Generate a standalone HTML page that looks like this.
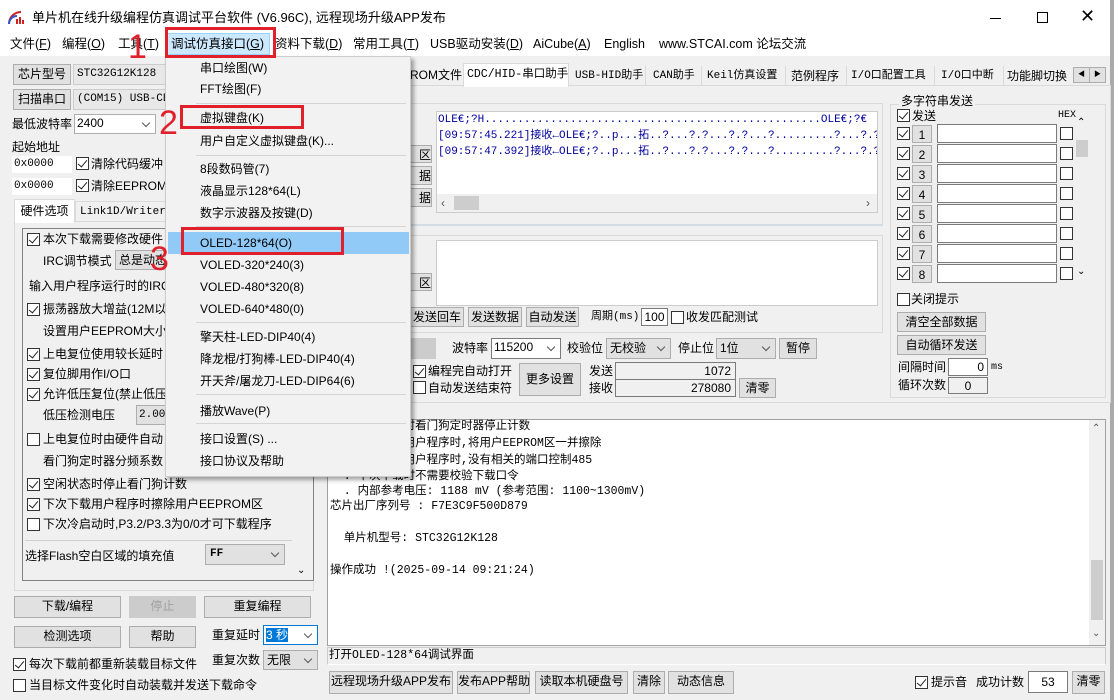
<!DOCTYPE html>
<html><head><meta charset="utf-8"><style>
*{box-sizing:border-box;margin:0;padding:0}
body{width:1114px;height:700px;overflow:hidden;background:#f0f0f0;font-family:"Liberation Sans","Noto Sans CJK SC",sans-serif;font-size:12px;color:#000;position:relative}
div,span{position:absolute;white-space:nowrap}
.t{line-height:16px}
.b{background:#e1e1e1;border:1px solid #adadad;text-align:center;line-height:18px}
.i{background:#fff;border:1px solid #7a7a7a;line-height:16px;padding-left:2px}
.c{width:13px;height:13px;border:1px solid #333;background:#fff}
.c.k::after{content:"";position:absolute;left:3px;top:0px;width:4px;height:8px;border:solid #222;border-width:0 1.5px 1.5px 0;transform:rotate(40deg)}
.m{font-family:"Liberation Mono","Noto Sans CJK SC",monospace;font-size:11px}
.pre{white-space:pre}
.red{border:3px solid #e0202a}
.n{color:#e0202a;font-size:34px;line-height:34px;font-family:"Liberation Sans",sans-serif}
.sel::after{content:"";position:absolute;right:6px;top:5px;width:5px;height:5px;border:solid #555;border-width:0 1px 1px 0;transform:rotate(45deg)}
.mi{left:34px;line-height:16px;font-size:12px}
.sep{left:30px;right:4px;height:1px;background:#d5d5d5}
</style></head><body>
<div style="left:0;top:0;width:1114px;height:56px;background:#fff"></div>
<div style="left:8px;top:11px;width:16px;height:14px">
<svg width="16" height="14"><path d="M1 13 A12 12 0 0 1 13 1" stroke="#c22" stroke-width="2" fill="none"/><path d="M1 13 A8 8 0 0 1 9 5" stroke="#3355cc" stroke-width="2" fill="none"/><rect x="8" y="8" width="2" height="5" fill="#c22"/><rect x="11" y="6" width="2" height="7" fill="#c22"/><rect x="14" y="9" width="2" height="4" fill="#c22"/></svg></div>
<div class="t" style="left:32px;top:10px;font-size:13px">单片机在线升级编程仿真调试平台软件 (V6.96C), 远程现场升级APP发布</div>
<div style="left:990px;top:18px;width:11px;height:1px;background:#000"></div>
<div style="left:1037px;top:12px;width:11px;height:11px;border:1px solid #000"></div>
<div class="t" style="left:1080px;top:8px;font-size:18px;font-weight:300">✕</div>
<div style="left:1110px;top:0;width:4px;height:700px;background:#aaa"></div>
<div style="left:166px;top:33px;width:104px;height:22px;background:#cce8ff;border:1px solid #99d1ff"></div>
<div class="t" style="left:10px;top:36px;font-size:12.5px">文件(<u>F</u>)</div>
<div class="t" style="left:62px;top:36px;font-size:12.5px">编程(<u>O</u>)</div>
<div class="t" style="left:118px;top:36px;font-size:12.5px">工具(<u>T</u>)</div>
<div class="t" style="left:171px;top:36px;font-size:12.5px">调试仿真接口(<u>G</u>)</div>
<div class="t" style="left:275px;top:36px;font-size:12.5px">资料下载(<u>D</u>)</div>
<div class="t" style="left:353px;top:36px;font-size:12.5px">常用工具(<u>T</u>)</div>
<div class="t" style="left:430px;top:36px;font-size:12.5px">USB驱动安装(<u>D</u>)</div>
<div class="t" style="left:533px;top:36px;font-size:12.5px">AiCube(<u>A</u>)</div>
<div class="t" style="left:604px;top:36px;font-size:12.5px">English</div>
<div class="t" style="left:659px;top:36px;font-size:12.5px">www.STCAI.com 论坛交流</div>

<div class="b" style="left:13px;top:64px;width:58px;height:21px">芯片型号</div>
<div class="m" style="left:73px;top:64px;width:94px;height:21px;background:#e8e8e8;border:1px solid #ccc;line-height:19px;padding-left:3px">STC32G12K128</div>
<div class="b" style="left:13px;top:89px;width:58px;height:21px">扫描串口</div>
<div class="m" style="left:73px;top:89px;width:94px;height:21px;background:#e8e8e8;border:1px solid #ccc;line-height:19px;padding-left:3px">(COM15) USB-CDC</div>
<div class="t" style="left:12px;top:116px">最低波特率</div>
<div class="i sel" style="left:74px;top:114px;width:82px;height:20px;border-color:#adadad">2400</div>
<div class="t" style="left:12px;top:139px">起始地址</div>
<div class="i m" style="left:12px;top:156px;width:60px;height:17px;border:none;line-height:17px">0x0000</div>
<div class="c k" style="left:76px;top:157px"></div><div class="t" style="left:91px;top:156px">清除代码缓冲</div>
<div class="i m" style="left:12px;top:178px;width:60px;height:17px;border:none;line-height:17px">0x0000</div>
<div class="c k" style="left:76px;top:179px"></div><div class="t" style="left:91px;top:178px">清除EEPROM缓</div>
<div style="left:14px;top:221px;width:300px;height:370px;border:1px solid #dadada;background:#f0f0f0"></div>
<div style="left:14px;top:199px;width:61px;height:24px;background:#fff;border:1px solid #dadada;border-bottom:none;text-align:center;line-height:22px">硬件选项</div>
<div class="m" style="left:75px;top:201px;width:92px;height:21px;border:1px solid #dadada;line-height:20px;padding-left:4px">Link1D/Writer1</div>
<div style="left:22px;top:228px;width:292px;height:353px;border:1px solid #828282"></div>
<div class="c k" style="left:27px;top:233px"></div><div class="t" style="left:43px;top:231px">本次下载需要修改硬件</div>
<div class="t" style="left:43px;top:253px">IRC调节模式</div><div class="b" style="left:115px;top:250px;width:60px;height:20px;text-align:left;padding-left:3px">总是动态</div>
<div class="t" style="left:29px;top:278px">输入用户程序运行时的IRC</div>
<div class="c k" style="left:27px;top:303px"></div><div class="t" style="left:43px;top:301px">振荡器放大增益(12M以上</div>
<div class="t" style="left:43px;top:323px">设置用户EEPROM大小</div>
<div class="c k" style="left:27px;top:348px"></div><div class="t" style="left:43px;top:346px">上电复位使用较长延时</div>
<div class="c k" style="left:27px;top:368px"></div><div class="t" style="left:43px;top:366px">复位脚用作I/O口</div>
<div class="c k" style="left:27px;top:388px"></div><div class="t" style="left:43px;top:386px">允许低压复位(禁止低压</div>
<div class="t" style="left:43px;top:407px">低压检测电压</div><div class="b m" style="left:136px;top:405px;width:40px;height:20px;text-align:left;padding-left:2px">2.00</div>
<div class="c" style="left:27px;top:433px"></div><div class="t" style="left:43px;top:431px">上电复位时由硬件自动</div>
<div class="t" style="left:43px;top:453px">看门狗定时器分频系数</div>
<div class="c k" style="left:27px;top:478px"></div><div class="t" style="left:43px;top:476px">空闲状态时停止看门狗计数</div>
<div class="c k" style="left:27px;top:498px"></div><div class="t" style="left:43px;top:496px">下次下载用户程序时擦除用户EEPROM区</div>
<div class="c" style="left:27px;top:518px"></div><div class="t" style="left:43px;top:516px">下次冷启动时,P3.2/P3.3为0/0才可下载程序</div>
<div style="left:25px;top:540px;width:267px;height:1px;background:#d0d0d0"></div>
<div class="t" style="left:25px;top:548px">选择Flash空白区域的填充值</div>
<div class="b sel m" style="left:205px;top:544px;width:80px;height:21px;text-align:left;padding-left:4px;font-weight:bold">FF</div>
<div class="t" style="left:297px;top:563px;font-size:10px">⌄</div>
<div class="b" style="left:14px;top:596px;width:107px;height:22px">下载/编程</div>
<div class="b" style="left:129px;top:596px;width:67px;height:22px;color:#a0a0a0;border-color:#ccc;background:#ccc">停止</div>
<div class="b" style="left:204px;top:596px;width:107px;height:22px">重复编程</div>
<div class="b" style="left:14px;top:626px;width:107px;height:22px">检测选项</div>
<div class="b" style="left:129px;top:626px;width:67px;height:22px">帮助</div>
<div class="t" style="left:212px;top:627px">重复延时</div>
<div class="i sel" style="left:263px;top:625px;width:55px;height:20px;border-color:#0078d7;padding-top:1px"><span style="position:static;background:#0078d7;color:#fff">3 秒</span></div>
<div class="t" style="left:212px;top:652px">重复次数</div>
<div class="b sel" style="left:263px;top:650px;width:55px;height:20px;text-align:left;padding-left:3px">无限</div>
<div class="c k" style="left:13px;top:658px"></div><div class="t" style="left:29px;top:656px">每次下载前都重新装载目标文件</div>
<div class="c" style="left:13px;top:679px"></div><div class="t" style="left:29px;top:677px">当目标文件变化时自动装载并发送下载命令</div>

<div style="left:405px;top:85px;width:706px;height:318px;border:1px solid #dadada;background:#f0f0f0"></div>
<div class="t" style="left:410px;top:67px">ROM文件</div>
<div style="left:463px;top:63px;width:106px;height:24px;background:#fff;border:1px solid #dadada;border-bottom:none"></div>
<div class="t m" style="left:467px;top:67px;font-size:11.5px">CDC/HID-串口助手</div>
<div class="t m" style="left:575px;top:68px">USB-HID助手</div>
<div style="left:645px;top:66px;width:1px;height:19px;background:#dadada"></div>
<div class="t m" style="left:653px;top:68px">CAN助手</div>
<div style="left:701px;top:66px;width:1px;height:19px;background:#dadada"></div>
<div class="t m" style="left:707px;top:68px">Keil仿真设置</div>
<div style="left:785px;top:66px;width:1px;height:19px;background:#dadada"></div>
<div class="t" style="left:791px;top:68px">范例程序</div>
<div style="left:846px;top:66px;width:1px;height:19px;background:#dadada"></div>
<div class="t m" style="left:851px;top:68px">I/O口配置工具</div>
<div style="left:934px;top:66px;width:1px;height:19px;background:#dadada"></div>
<div class="t m" style="left:941px;top:68px">I/O口中断</div>
<div style="left:1003px;top:66px;width:1px;height:19px;background:#dadada"></div>
<div class="t" style="left:1007px;top:68px">功能脚切换</div>
<div class="b" style="left:1073px;top:67px;width:17px;height:16px;font-size:7px;line-height:14px">◀</div>
<div class="b" style="left:1089px;top:67px;width:17px;height:16px;font-size:7px;line-height:14px">▶</div>
<div style="left:409px;top:103px;width:474px;height:122px;border:1px solid #dadada"></div>
<div style="left:436px;top:111px;width:442px;height:102px;background:#fff;border:1px solid #ccc;overflow:hidden">
<div class="t m" style="left:1px;top:0px;color:#0000a0">OLE€;?H...................................................OLE€;?€</div>
<div class="t m" style="left:1px;top:16px;color:#0000a0">[09:57:45.221]接收←OLE€;?..p...拓..?...?.?...?.?...?.........?...?.?...</div>
<div class="t m" style="left:1px;top:32px;color:#0000a0">[09:57:47.392]接收←OLE€;?..p...拓..?...?.?...?.?...?.........?...?.?...</div>
</div>
<div style="left:437px;top:194px;width:440px;height:18px;background:#f0f0f0"></div>
<div style="left:454px;top:196px;width:25px;height:14px;background:#cdcdcd"></div>
<div class="t" style="left:441px;top:195px;color:#555">‹</div><div class="t" style="left:866px;top:195px;color:#555">›</div>
<div class="b" style="left:408px;top:145px;width:24px;height:18px;text-align:right">区</div>
<div class="b" style="left:408px;top:166px;width:24px;height:19px;text-align:right">据</div>
<div class="b" style="left:408px;top:188px;width:24px;height:19px;text-align:right">据</div>
<div style="left:409px;top:225px;width:474px;height:1px;background:#cde"></div>
<div style="left:409px;top:235px;width:474px;height:98px;border:1px solid #dadada"></div>
<div style="left:436px;top:240px;width:442px;height:66px;background:#fff;border:1px solid #ccc"></div>
<div class="b" style="left:408px;top:273px;width:24px;height:18px;text-align:right">区</div>
<div class="b" style="left:410px;top:307px;width:54px;height:20px">发送回车</div>
<div class="b" style="left:468px;top:307px;width:54px;height:20px">发送数据</div>
<div class="b" style="left:526px;top:307px;width:53px;height:20px">自动发送</div>
<div class="t m" style="left:591px;top:309px">周期(ms)</div>
<div class="i" style="left:641px;top:308px;width:27px;height:18px;text-align:center;padding:0">100</div>
<div class="c" style="left:671px;top:311px"></div><div class="t" style="left:686px;top:309px">收发匹配测试</div>
<div class="b" style="left:410px;top:338px;width:26px;height:21px;background:#ccc;border-color:#ccc"></div>
<div class="t" style="left:452px;top:340px">波特率</div>
<div class="i sel" style="left:491px;top:338px;width:70px;height:21px">115200</div>
<div class="t" style="left:567px;top:340px">校验位</div>
<div class="b sel" style="left:606px;top:338px;width:65px;height:21px;text-align:left;padding-left:3px">无校验</div>
<div class="t" style="left:678px;top:340px">停止位</div>
<div class="b sel" style="left:716px;top:338px;width:60px;height:21px;text-align:left;padding-left:3px">1位</div>
<div class="b" style="left:779px;top:338px;width:38px;height:21px">暂停</div>
<div class="c k" style="left:413px;top:365px"></div><div class="t" style="left:428px;top:363px">编程完自动打开</div>
<div class="c" style="left:413px;top:381px"></div><div class="t" style="left:428px;top:380px">自动发送结束符</div>
<div class="b" style="left:519px;top:363px;width:62px;height:33px;line-height:31px">更多设置</div>
<div class="t" style="left:589px;top:363px">发送</div>
<div class="i" style="left:615px;top:362px;width:121px;height:18px;text-align:right;padding-right:4px;background:#f0f0f0">1072</div>
<div class="t" style="left:589px;top:380px">接收</div>
<div class="i" style="left:615px;top:379px;width:121px;height:18px;text-align:right;padding-right:4px;background:#f0f0f0">278080</div>
<div class="b" style="left:739px;top:378px;width:37px;height:20px">清零</div>

<div style="left:890px;top:104px;width:216px;height:294px;border:1px solid #dadada"></div>
<div class="t" style="left:899px;top:93px;background:#f0f0f0;padding:0 2px">多字符串发送</div>
<div class="c k" style="left:897px;top:109px"></div><div class="t" style="left:912px;top:108px">发送</div>
<div class="t m" style="left:1058px;top:108px;font-size:10px">HEX</div>
<div style="left:1075px;top:123px;width:14px;height:160px;background:#f0f0f0"></div>
<div class="t" style="left:1077px;top:115px;font-size:10px">⌃</div>
<div style="left:1076px;top:140px;width:12px;height:17px;background:#cdcdcd"></div>
<div class="t" style="left:1077px;top:264px;font-size:10px">⌄</div>
<div class="c k" style="left:897px;top:127px"></div><div class="b" style="left:912px;top:125px;width:20px;height:18px">1</div><div class="i" style="left:937px;top:124px;width:120px;height:19px"></div><div class="c" style="left:1060px;top:127px"></div>
<div class="c k" style="left:897px;top:147px"></div><div class="b" style="left:912px;top:145px;width:20px;height:18px">2</div><div class="i" style="left:937px;top:144px;width:120px;height:19px"></div><div class="c" style="left:1060px;top:147px"></div>
<div class="c k" style="left:897px;top:167px"></div><div class="b" style="left:912px;top:165px;width:20px;height:18px">3</div><div class="i" style="left:937px;top:164px;width:120px;height:19px"></div><div class="c" style="left:1060px;top:167px"></div>
<div class="c k" style="left:897px;top:187px"></div><div class="b" style="left:912px;top:185px;width:20px;height:18px">4</div><div class="i" style="left:937px;top:184px;width:120px;height:19px"></div><div class="c" style="left:1060px;top:187px"></div>
<div class="c k" style="left:897px;top:207px"></div><div class="b" style="left:912px;top:205px;width:20px;height:18px">5</div><div class="i" style="left:937px;top:204px;width:120px;height:19px"></div><div class="c" style="left:1060px;top:207px"></div>
<div class="c k" style="left:897px;top:227px"></div><div class="b" style="left:912px;top:225px;width:20px;height:18px">6</div><div class="i" style="left:937px;top:224px;width:120px;height:19px"></div><div class="c" style="left:1060px;top:227px"></div>
<div class="c k" style="left:897px;top:247px"></div><div class="b" style="left:912px;top:245px;width:20px;height:18px">7</div><div class="i" style="left:937px;top:244px;width:120px;height:19px"></div><div class="c" style="left:1060px;top:247px"></div>
<div class="c k" style="left:897px;top:267px"></div><div class="b" style="left:912px;top:265px;width:20px;height:18px">8</div><div class="i" style="left:937px;top:264px;width:120px;height:19px"></div><div class="c" style="left:1060px;top:267px"></div>
<div class="c" style="left:897px;top:293px"></div><div class="t" style="left:911px;top:291px">关闭提示</div>
<div class="b" style="left:897px;top:312px;width:89px;height:20px">清空全部数据</div>
<div class="b" style="left:897px;top:335px;width:89px;height:20px">自动循环发送</div>
<div class="t" style="left:898px;top:359px">间隔时间</div>
<div class="i" style="left:948px;top:358px;width:40px;height:18px;text-align:right;padding-right:3px">0</div>
<div class="t m" style="left:991px;top:360px;font-size:10px">ms</div>
<div class="t" style="left:898px;top:377px">循环次数</div>
<div class="i" style="left:948px;top:377px;width:40px;height:17px;text-align:center;padding:0;background:#f0f0f0">0</div>

<div style="left:327px;top:419px;width:779px;height:227px;background:#fff;border:1px solid #a0a0a0"></div>
<div style="left:1089px;top:420px;width:16px;height:225px;background:#f0f0f0"></div>
<div class="t" style="left:1092px;top:421px;font-size:10px;color:#555">⌃</div>
<div style="left:1091px;top:560px;width:12px;height:60px;background:#cdcdcd"></div>
<div class="t" style="left:1092px;top:626px;font-size:10px;color:#555">⌄</div>
<div class="t m pre" style="left:330px;top:419px;font-size:11.5px">  . 空闲状态时看门狗定时器停止计数</div>
<div class="t m pre" style="left:330px;top:436px;font-size:11.5px">  . 下次下载用户程序时,将用户EEPROM区一并擦除</div>
<div class="t m pre" style="left:330px;top:453px;font-size:11.5px">  . 下次下载用户程序时,没有相关的端口控制485</div>
<div class="t m pre" style="left:330px;top:469px;font-size:11.5px">  . 下次下载时不需要校验下载口令</div>
<div class="t m pre" style="left:330px;top:484px;font-size:11.5px">  . 内部参考电压: 1188 mV (参考范围: 1100~1300mV)</div>
<div class="t m pre" style="left:330px;top:499px;font-size:11.5px">芯片出厂序列号 : F7E3C9F500D879</div>
<div class="t m pre" style="left:330px;top:531px;font-size:11.5px">  单片机型号: STC32G12K128</div>
<div class="t m pre" style="left:330px;top:563px;font-size:11.5px">操作成功 !(2025-09-14 09:21:24)</div>
<div style="left:327px;top:647px;width:779px;height:18px;border:1px solid #ccc;border-bottom-color:#fff"></div>
<div class="t m" style="left:329px;top:648px;font-size:11.5px">打开OLED-128*64调试界面</div>
<div class="b" style="left:329px;top:671px;width:124px;height:23px">远程现场升级APP发布</div>
<div class="b" style="left:457px;top:671px;width:73px;height:23px">发布APP帮助</div>
<div class="b" style="left:535px;top:671px;width:93px;height:23px">读取本机硬盘号</div>
<div class="b" style="left:633px;top:671px;width:32px;height:23px">清除</div>
<div class="b" style="left:668px;top:671px;width:66px;height:23px">动态信息</div>
<div class="c k" style="left:915px;top:676px"></div><div class="t" style="left:931px;top:674px">提示音</div>
<div class="t" style="left:976px;top:674px">成功计数</div>
<div class="i" style="left:1028px;top:671px;width:40px;height:22px;text-align:center;padding:0;line-height:20px">53</div>
<div class="b" style="left:1072px;top:671px;width:33px;height:23px">清零</div>

<div style="left:165px;top:56px;width:246px;height:421px;background:#f2f2f2;border:1px solid #ccc;box-shadow:3px 3px 4px rgba(0,0,0,0.35)">
<div class="mi" style="top:3px">串口绘图(W)</div>
<div class="mi" style="top:24px">FFT绘图(F)</div>
<div class="sep" style="top:46px"></div>
<div class="mi" style="top:53px">虚拟键盘(K)</div>
<div class="mi" style="top:76px">用户自定义虚拟键盘(K)...</div>
<div class="sep" style="top:98px"></div>
<div class="mi" style="top:104px">8段数码管(7)</div>
<div class="mi" style="top:126px">液晶显示128*64(L)</div>
<div class="mi" style="top:148px">数字示波器及按键(D)</div>
<div class="sep" style="top:169px"></div>
<div style="left:2px;top:175px;width:241px;height:22px;background:#91c9f7"></div>
<div class="mi" style="top:178px">OLED-128*64(O)</div>
<div class="mi" style="top:200px">VOLED-320*240(3)</div>
<div class="mi" style="top:222px">VOLED-480*320(8)</div>
<div class="mi" style="top:244px">VOLED-640*480(0)</div>
<div class="sep" style="top:265px"></div>
<div class="mi" style="top:272px">擎天柱-LED-DIP40(4)</div>
<div class="mi" style="top:294px">降龙棍/打狗棒-LED-DIP40(4)</div>
<div class="mi" style="top:316px">开天斧/屠龙刀-LED-DIP64(6)</div>
<div class="sep" style="top:337px"></div>
<div class="mi" style="top:346px">播放Wave(P)</div>
<div class="sep" style="top:366px"></div>
<div class="mi" style="top:374px">接口设置(S) ...</div>
<div class="mi" style="top:396px">接口协议及帮助</div>
</div>
<div class="red" style="left:165px;top:27px;width:111px;height:31px"></div>
<div class="n" style="left:128px;top:30px">1</div>
<div class="red" style="left:180px;top:105px;width:124px;height:24px"></div>
<div class="n" style="left:159px;top:106px">2</div>
<div class="red" style="left:181px;top:227px;width:163px;height:28px"></div>
<div class="n" style="left:150px;top:242px">3</div>
</body></html>
